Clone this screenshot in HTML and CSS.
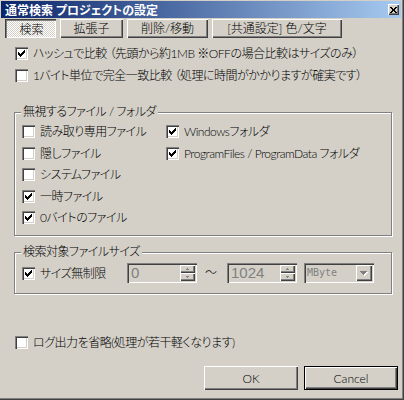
FILE: index.html
```html
<!DOCTYPE html>
<html lang="ja">
<head>
<meta charset="utf-8">
<title>通常検索 プロジェクトの設定</title>
<link rel="stylesheet" href="styles.css">
</head>
<body>
<svg class="defs" width="0" height="0" aria-hidden="true">
  <symbol id="chk" viewBox="0 0 7 7"><path d="M6 0h1v1h-1z M5 1h2v1h-2z M0 2h1v1h-1z M4 2h3v1h-3z M0 3h2v1h-2z M3 3h3v1h-3z M0 4h5v1h-5z M1 5h3v1h-3z M2 6h1v1h-1z"/></symbol>
</svg>
<div class="window">
  <div class="caption">
    <span class="caption-title">通常検索 プロジェクトの設定</span>
    <span class="caption-close"><svg width="7" height="6" viewBox="0 0 7 6" shape-rendering="crispEdges"><path d="M0 0h2v1h-2z M5 0h2v1h-2z M1 1h2v1h-2z M4 1h2v1h-2z M2 2h3v2h-3z M1 4h2v1h-2z M4 4h2v1h-2z M0 5h2v1h-2z M5 5h2v1h-2z"/></svg></span>
  </div>

  <div class="tabs">
    <div class="tab tab-active tab-1"><span>検索</span></div>
    <div class="tab tab-2"><span>拡張子</span></div>
    <div class="tab tab-3"><span>削除/移動</span></div>
    <div class="tab tab-4"><span>[共通設定] 色/文字</span></div>
  </div>

  <div class="content">
    <div class="check row-hash"><span class="cb"><svg class="mark" width="7" height="7" shape-rendering="crispEdges"><use href="#chk"/></svg></span><span class="lbl">ハッシュで比較 （先頭から約1MB ※OFFの場合比較はサイズのみ）</span></div>
    <div class="check row-byte"><span class="cb"></span><span class="lbl">1バイト単位で完全一致比較 （処理に時間がかかりますが確実です）</span></div>

    <div class="group group-ignore">
      <div class="group-title">無視するファイル / フォルダ</div>
      <div class="group-cols">
        <div class="col col-left">
          <div class="check"><span class="cb"></span><span class="lbl">読み取り専用ファイル</span></div>
          <div class="check"><span class="cb"></span><span class="lbl">隠しファイル</span></div>
          <div class="check"><span class="cb"></span><span class="lbl">システムファイル</span></div>
          <div class="check"><span class="cb"><svg class="mark" width="7" height="7" shape-rendering="crispEdges"><use href="#chk"/></svg></span><span class="lbl">一時ファイル</span></div>
          <div class="check"><span class="cb"><svg class="mark" width="7" height="7" shape-rendering="crispEdges"><use href="#chk"/></svg></span><span class="lbl">0バイトのファイル</span></div>
        </div>
        <div class="col">
          <div class="check"><span class="cb"><svg class="mark" width="7" height="7" shape-rendering="crispEdges"><use href="#chk"/></svg></span><span class="lbl">Windowsフォルダ</span></div>
          <div class="check"><span class="cb"><svg class="mark" width="7" height="7" shape-rendering="crispEdges"><use href="#chk"/></svg></span><span class="lbl">ProgramFiles / ProgramData フォルダ</span></div>
        </div>
      </div>
    </div>

    <div class="group group-size">
      <div class="group-title">検索対象ファイルサイズ</div>
      <div class="size-row">
        <div class="check size-check"><span class="cb"><svg class="mark" width="7" height="7" shape-rendering="crispEdges"><use href="#chk"/></svg></span><span class="lbl">サイズ無制限</span></div>
        <div class="spin">
          <span class="spin-text">0</span>
          <span class="spin-btns">
            <span class="spin-btn"><svg width="3" height="2" viewBox="0 0 3 2" shape-rendering="crispEdges"><path d="M1 0h1v1h-1z M0 1h3v1h-3z"/></svg></span>
            <span class="spin-btn"><svg width="3" height="2" viewBox="0 0 3 2" shape-rendering="crispEdges"><path d="M0 0h3v1h-3z M1 1h1v1h-1z"/></svg></span>
          </span>
        </div>
        <span class="tilde">〜</span>
        <div class="spin">
          <span class="spin-text">1024</span>
          <span class="spin-btns">
            <span class="spin-btn"><svg width="3" height="2" viewBox="0 0 3 2" shape-rendering="crispEdges"><path d="M1 0h1v1h-1z M0 1h3v1h-3z"/></svg></span>
            <span class="spin-btn"><svg width="3" height="2" viewBox="0 0 3 2" shape-rendering="crispEdges"><path d="M0 0h3v1h-3z M1 1h1v1h-1z"/></svg></span>
          </span>
        </div>
        <div class="combo">
          <span class="combo-text">MByte</span>
          <span class="combo-btn"><svg width="8" height="5" viewBox="0 0 8 5" shape-rendering="crispEdges"><path class="emb" d="M1 1h7v1h-7z M2 2h5v1h-5z M3 3h3v1h-3z M4 4h1v1h-1z"/><path class="arr" d="M0 0h7v1h-7z M1 1h5v1h-5z M2 2h3v1h-3z M3 3h1v1h-1z"/></svg></span>
        </div>
      </div>
    </div>

    <div class="check row-log"><span class="cb"></span><span class="lbl">ログ出力を省略(処理が若干軽くなります)</span></div>

    <div class="buttons">
      <div class="btn">OK</div>
      <div class="btn btn-default">Cancel</div>
    </div>
  </div>
</div>
</body>
</html>
```

FILE: styles.css
```css
* { box-sizing: border-box; }
html, body { margin: 0; padding: 0; }
body {
  width: 404px;
  height: 400px;
  overflow: hidden;
  background: #d4d0c8;
  font-family: "Lato", "Noto Sans CJK JP", sans-serif;
  font-size: 12px;
  font-weight: 300;
  line-height: 13px;
  letter-spacing: -0.5px;
  color: #000;
  font-feature-settings: "palt";
}
.defs { position: absolute; width: 0; height: 0; }

.window {
  width: 404px;
  height: 400px;
  padding: 1px 3px 3px 1px;
  background: #d4d0c8;
  box-shadow: inset -1px -1px #404040, inset -2px -2px #808080;
}

/* caption */
.caption {
  height: 17px;
  display: flex;
  align-items: center;
  justify-content: space-between;
  padding-left: 4px;
  background: linear-gradient(90deg, #0a246a, #a6caf0);
}
.caption-title {
  color: #fff;
  font-family: "Noto Sans CJK JP", sans-serif;
  font-weight: 700;
  font-size: 12px;
  letter-spacing: 0;
  line-height: 14px;
}
.caption-close {
  width: 11px;
  height: 11px;
  margin-right: 2px;
  display: flex;
  align-items: center;
  justify-content: center;
  background: #d4d0c8;
  box-shadow: inset 1px 1px #fff, inset -1px -1px #404040, inset -2px -2px #808080;
}
.caption-close svg { fill: #000; display: block; margin-left: -1px; }

/* tabs */
.tabs {
  display: flex;
  gap: 4px;
  margin-top: 1px;
  padding-left: 4px;
}
.tab {
  height: 19px;
  display: flex;
  align-items: center;
  justify-content: center;
  background: #d4d0c8;
  box-shadow: inset 1px 1px #fff, inset -1px -1px #404040, inset -2px -2px #808080;
  line-height: 14px;
  letter-spacing: 0;
}
.tab-1 { width: 51px; }
.tab-2 { width: 63px; }
.tab-3 { width: 81px; }
.tab-4 { width: 130px; }
.tab-active {
  background: repeating-conic-gradient(#fff 0 25%, #d4d0c8 0 50%) 0 0 / 2px 2px;
  box-shadow: inset 1px 1px #404040, inset 2px 2px #808080, inset -1px -1px #fff;
}
.tab-active span { position: relative; top: 1px; left: 1px; }

/* checkboxes */
.check {
  display: flex;
  align-items: center;
  gap: 5px;
  height: 13px;
  white-space: nowrap;
}
.cb {
  flex: none;
  width: 13px;
  height: 13px;
  padding: 3px;
  background: #fff;
  box-shadow: inset 1px 1px #808080, inset 2px 2px #404040, inset -1px -1px #fff, inset -2px -2px #d4d0c8;
}
.mark { display: block; fill: #000; }

.content { padding-left: 14px; }
.row-hash { margin-top: 9px; }
.row-byte { margin-top: 9px; }

/* groups */
.group {
  margin-left: -1px;
  width: 378px;
  border: 1px solid #808080;
  box-shadow: inset 1px 1px #fff, 1px 1px #fff;
}
.group-title {
  width: fit-content;
  margin: -8px 0 0 6px;
  padding: 0 2px;
  background: #d4d0c8;
  line-height: 14px;
}
.group-ignore {
  margin-top: 30px;
  height: 124px;
}
.group-cols {
  display: flex;
  margin-top: 6px;
  padding-left: 7px;
}
.col {
  display: flex;
  flex-direction: column;
  gap: 8.5px;
}
.col-left { width: 144px; }

.group-size {
  margin-top: 16px;
  height: 42px;
}
.size-row {
  display: flex;
  align-items: center;
  height: 20px;
  margin-top: 4px;
  padding-left: 7px;
}
.size-check { width: 105px; }

.spin, .combo {
  width: 70px;
  height: 20px;
  padding: 2px;
  display: flex;
  background: #d4d0c8;
  box-shadow: inset 1px 1px #808080, inset 2px 2px #404040, inset -1px -1px #fff, inset -2px -2px #d4d0c8;
}
.spin-text {
  flex: 1;
  font-family: "Liberation Sans", sans-serif;
  font-size: 15px;
  font-weight: 400;
  letter-spacing: 0;
  line-height: 16px;
  color: #808080;
  padding-left: 2px;
}
.spin-btns {
  width: 15px;
  display: flex;
  flex-direction: column;
}
.spin-btn {
  height: 8px;
  display: flex;
  align-items: center;
  justify-content: center;
  background: #d4d0c8;
  box-shadow: inset 1px 1px #fff, inset -1px -1px #404040, inset -2px -2px #808080;
}
.spin-btn svg { display: block; fill: #808080; margin-left: -1px; }
.tilde {
  width: 12px;
  margin: 0 10px 0 8px;
  text-align: center;
  line-height: 14px;
  letter-spacing: 0;
}
.combo { margin-left: 7px; }
.combo-text {
  flex: 1;
  font-family: "DejaVu Sans Mono", monospace;
  font-size: 10px;
  font-weight: 400;
  letter-spacing: 0;
  line-height: 16px;
  color: #808080;
  padding-left: 1px;
}
.combo-btn {
  width: 16px;
  height: 16px;
  display: flex;
  align-items: center;
  justify-content: center;
  background: #d4d0c8;
  box-shadow: inset 1px 1px #fff, inset -1px -1px #404040, inset -2px -2px #808080;
}
.combo-btn svg { display: block; }
.combo-btn .arr { fill: #808080; }
.combo-btn .emb { fill: #fff; }

.row-log { margin-top: 42px; }

/* buttons */
.buttons {
  display: flex;
  justify-content: flex-end;
  gap: 6px;
  margin-top: 17px;
  padding-right: 3px;
}
.btn {
  width: 94px;
  height: 24px;
  display: flex;
  align-items: center;
  justify-content: center;
  font-family: "Lato", "Liberation Sans", sans-serif;
  font-size: 12px;
  font-weight: 300;
  letter-spacing: 0;
  background: #d4d0c8;
  box-shadow: inset 1px 1px #fff, inset -1px -1px #404040, inset -2px -2px #808080;
}
.btn-default {
  box-shadow: inset 0 0 0 1px #000, inset 2px 2px #fff, inset -2px -2px #404040, inset -3px -3px #808080;
}
```
